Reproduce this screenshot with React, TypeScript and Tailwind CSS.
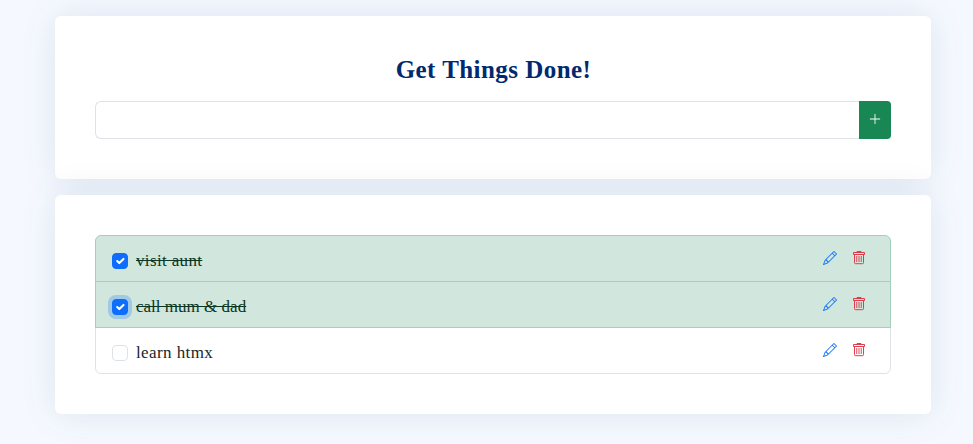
import { useState } from "react";
import { BsPencil, BsPlusLg } from "react-icons/bs";

type Task = { id: number; title: string; done: boolean };

const initialTasks: Task[] = [
  { id: 1, title: "visit aunt", done: true },
  { id: 2, title: "call mum & dad", done: true },
  { id: 3, title: "learn htmx", done: false },
];

const titleTracking: Record<number, string> = {
  1: "tracking-[0.35px]",
  2: "tracking-[0.01px]",
  3: "tracking-[0.4px]",
};

const card =
  "rounded-md bg-white px-10 shadow-[0_0_36px_rgba(8,48,112,0.1)]";

function TrashIcon() {
  return (
    <svg viewBox="0 0 14 14" className="size-3.5" fill="none" stroke="currentColor">
      <path d="M5 1.5V.5h4v1M1.5 1.5h11v2h-11zM2.5 3.5v8.2a1 1 0 0 0 1 1h7a1 1 0 0 0 1-1V3.5" strokeWidth="0.95" />
      <path d="M4.75 5v6M7 5v6M9.25 5v6" strokeWidth="0.9" />
    </svg>
  );
}

function Checkbox({ checked, focused, onClick }: { checked: boolean; focused: boolean; onClick: () => void }) {
  const tone = checked ? "border-[#0d6efd] bg-[#0d6efd]" : "border-[#dee2e6] bg-white";
  const ring = focused ? "shadow-[0_0_0_4px_rgba(13,110,253,0.25)]" : "";
  return (
    <button
      role="checkbox"
      aria-checked={checked}
      onClick={onClick}
      className={`size-4 shrink-0 rounded-[4px] border outline-none ${tone} ${ring}`}
    >
      {checked && (
        <svg viewBox="0 0 20 20" className="size-full" fill="none">
          <path d="m6 10 3 3 6-6" stroke="#fff" strokeWidth="3" strokeLinecap="round" strokeLinejoin="round" />
        </svg>
      )}
    </button>
  );
}

export default function App() {
  const [tasks, setTasks] = useState(initialTasks);
  const [focused, setFocused] = useState(2);

  const toggle = (id: number) => {
    setFocused(id);
    setTasks(tasks.map((t) => (t.id === id ? { ...t, done: !t.done } : t)));
  };

  return (
    <div className="h-[444px] overflow-hidden bg-[#f5f9ff] pt-4 pr-[42px] pl-[55px] font-['Liberation_Serif',serif]">
      <section className={`${card} h-[163px] pt-10`}>
        <h1 className="h-[45px] pl-px text-center text-[25px] leading-[28px] font-bold tracking-[0.45px] text-[#012970]">
          Get Things Done!
        </h1>
        <div className="flex h-[38px]">
          <input
            aria-label="New task"
            className="min-w-0 flex-1 rounded-l-md border border-r-0 border-[#dee2e6] px-3 outline-none"
          />
          <button aria-label="Add" className="flex w-8 items-center justify-center rounded-r-[4px] bg-[#198754] text-white">
            <BsPlusLg className="mb-0.5 size-3.5" />
          </button>
        </div>
      </section>

      <section className={`${card} mt-4 h-[219px] pt-10`}>
        <ul>
          {tasks.map((task) => (
            <li
              key={task.id}
              className={`relative -mt-px flex h-[47px] items-center border pr-6 pl-4 first:mt-0 first:rounded-t-md last:rounded-b-md ${
                task.done ? "z-10 border-[#a3cfbb] bg-[#d1e7dd] text-[#0a3622]" : "border-[#dee2e6] bg-white text-[#212529]"
              }`}
            >
              <div className="flex flex-1 items-center gap-2 pt-[5px]">
                <Checkbox checked={task.done} focused={focused === task.id} onClick={() => toggle(task.id)} />
                <span className={`text-[17px] leading-6 ${titleTracking[task.id]} ${task.done ? "line-through" : ""}`}>
                  {task.title}
                </span>
              </div>
              <button aria-label="Edit" className="mb-0.5 text-[#0d6efd]">
                <BsPencil className="size-3.5" />
              </button>
              <button aria-label="Delete" className="mb-0.5 ml-[15px] text-[#dc3545]">
                <TrashIcon />
              </button>
            </li>
          ))}
        </ul>
      </section>
    </div>
  );
}
